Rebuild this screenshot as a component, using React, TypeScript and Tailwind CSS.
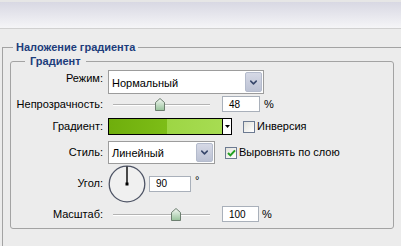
import { ChevronDown } from "lucide-react";

function Label({ text }: { text: string }) {
  return (
    <div className="w-[92px] shrink-0 text-right leading-[13px]">{text}</div>
  );
}

function ArrowButton() {
  return (
    <div className="flex h-full w-[17px] items-center justify-center rounded-[2px] border border-[#b4bbcc] bg-gradient-to-b from-[#d6d9e6] to-[#bcc2d4]">
      <ChevronDown size={11} strokeWidth={3.4} color="#37476b" />
    </div>
  );
}

function Select({ value, width, height }: { value: string; width: string; height: string }) {
  return (
    <div
      className={`${width} ${height} ml-[5px] flex shrink-0 items-stretch border border-[#9c9c9c] bg-white p-[1px]`}
    >
      <div className="flex flex-1 items-center pl-[2px] pt-[2px] text-[11px]">{value}</div>
      <ArrowButton />
    </div>
  );
}

function Thumb() {
  return (
    <svg width="10" height="13" viewBox="0 0 10 13">
      <defs>
        <linearGradient id="th" x1="0" y1="0" x2="0" y2="1">
          <stop offset="0" stopColor="#f4f8f4" />
          <stop offset="1" stopColor="#97c39a" />
        </linearGradient>
      </defs>
      <path d="M0.5 4.5 L5 0.5 L9.5 4.5 L9.5 12.5 L0.5 12.5 Z" fill="url(#th)" stroke="#6d7f70" strokeWidth="1" />
    </svg>
  );
}

function Slider({ pos }: { pos: number }) {
  return (
    <div className="relative ml-[5px] flex h-full w-[102px] shrink-0 items-center">
      <div className="ml-[5px] h-px w-[97px] bg-[#b3b3b3] shadow-[0_1px_0_#ffffff]" />
      <div className="absolute top-[2px]" style={{ left: pos }}>
        <Thumb />
      </div>
    </div>
  );
}

function NumBox({ value, width, className = "" }: { value: string; width: string; className?: string }) {
  return (
    <div
      className={`${width} ${className} flex h-[16px] shrink-0 items-center border border-[#a9b0ba] bg-white pl-[6px] text-[10px]`}
    >
      {value}
    </div>
  );
}

function Check({ checked }: { checked?: boolean }) {
  return (
    <div className="flex h-[12px] w-[12px] shrink-0 items-center justify-center border border-[#6c7a91] bg-gradient-to-br from-[#e2e2dc] to-[#ffffff]">
      {checked && (
        <svg width="9" height="8" viewBox="0 0 9 8">
          <path d="M1 4 L3.4 6.4 L8 1.3" fill="none" stroke="#21a121" strokeWidth="2" />
        </svg>
      )}
    </div>
  );
}

function Dial() {
  return (
    <svg width="38" height="38" viewBox="0 0 38 38" className="ml-[5px] shrink-0">
      <circle cx="19" cy="19" r="17.8" fill="#f0f0f0" stroke="#4f5566" strokeWidth="1.3" />
      <line x1="19" y1="19" x2="19" y2="1.5" stroke="#000" strokeWidth="1.4" />
      <rect x="17.5" y="17.5" width="3" height="3" fill="#000" />
    </svg>
  );
}

export default function App() {
  return (
    <div className="h-[246px] w-[401px] overflow-hidden bg-[#ececec] font-['Liberation_Sans',Arial,sans-serif] text-[11px] text-black">
      {/* window strip */}
      <div className="h-[2px] bg-[#e6e6e6]" />
      <div className="h-[26px] bg-gradient-to-b from-[#d8d8e3] to-[#f5f5f7]" />
      <div className="h-px bg-[#d0d0d0]" />
      <div className="h-[11px]" />

      <fieldset className="ml-[2px] w-[430px] border border-r-0 border-[#a3a3a3] pb-[30px] pl-[7px]">
        <legend className="ml-[3px] px-[3px] text-[11px] font-bold leading-[14px] text-[#1d3d7b]">
          Наложение градиента
        </legend>

        <fieldset className="w-[384px] rounded-[3px] border border-[#a3a3a3] pb-[6px]">
          <legend className="ml-[14px] px-[5px] font-bold leading-[14px] text-[#1d3d7b]">
            Градиент
          </legend>

          {/* Режим */}
          <div className="mt-[2px] flex h-[24px] items-start">
            <div className="pt-[2px]">
              <Label text="Режим:" />
            </div>
            <Select value="Нормальный" width="w-[156px]" height="h-[24px]" />
          </div>

          {/* Непрозрачность */}
          <div className="mt-[2px] flex h-[16px] items-center">
            <Label text="Непрозрачность:" />
            <Slider pos={47} />
            <NumBox value="48" width="w-[38px]" className="ml-[12px]" />
            <span className="ml-[4px]">%</span>
          </div>

          {/* Градиент */}
          <div className="mt-[6px] flex h-[17px] items-center">
            <Label text="Градиент:" />
            <div className="ml-[5px] flex h-[17px] shrink-0 border border-black">
              <div className="w-[113px] bg-[linear-gradient(to_right,#6fae0c,#7dbd17_51%,#9dd644_51%,#a7dc52)]" />
              <div className="flex w-[9px] items-center justify-center border-l border-black bg-white">
                <svg width="5" height="3" viewBox="0 0 5 3">
                  <path d="M0 0 H5 L2.5 3 Z" fill="#000" />
                </svg>
              </div>
            </div>
            <div className="ml-[11px]">
              <Check />
            </div>
            <span className="ml-[2px]">Инверсия</span>
          </div>

          {/* Стиль */}
          <div className="mt-[6px] flex h-[23px] items-center">
            <Label text="Стиль:" />
            <Select value="Линейный" width="w-[107px]" height="h-[23px]" />
            <div className="ml-[10px]">
              <Check checked />
            </div>
            <span className="ml-[2px]">Выровнять по слою</span>
          </div>

          {/* Угол */}
          <div className="mt-[1px] flex h-[37px] items-center">
            <Label text="Угол:" />
            <Dial />
            <NumBox value="90" width="w-[42px]" className="ml-[3px]" />
            <span className="ml-[4px] self-start pt-[10px] leading-[11px]">°</span>
          </div>

          {/* Масштаб */}
          <div className="mt-[4px] flex h-[16px] items-center">
            <Label text="Масштаб:" />
            <Slider pos={63} />
            <NumBox value="100" width="w-[37px]" className="ml-[12px]" />
            <span className="ml-[3px]">%</span>
          </div>
        </fieldset>
      </fieldset>
    </div>
  );
}
